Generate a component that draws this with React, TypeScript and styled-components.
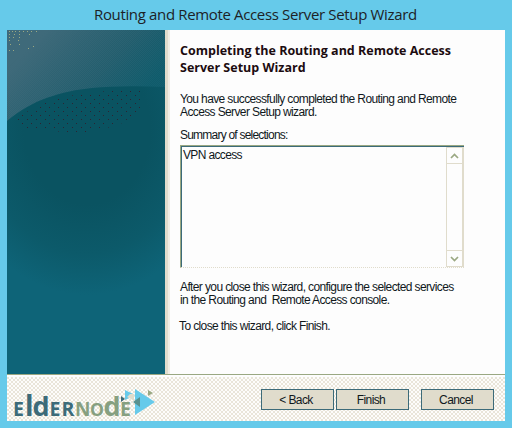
import React from "react";
import styled, { createGlobalStyle } from "styled-components";

const GlobalStyle = createGlobalStyle`
  *{box-sizing:border-box}
  body{margin:0;background:#66caea;overflow:hidden}
`;

const beige = "#e0dccc";
const olive = "#9aa882";
const teal = "#3c6b79";

const Window = styled.div`
  width: 512px;
  height: 428px;
  padding: 0 7px 7px;
  display: flex;
  flex-direction: column;
  background: #66caea;
  font-family: "Liberation Sans", Arial, sans-serif;
  color: #10181c;
`;

const TitleBar = styled.header`
  height: 30px;
  flex: none;
  padding-left: 87px;
  white-space: nowrap;
  font: 15px/29px "Open Sans", sans-serif;
  letter-spacing: -0.35px;
  color: #1d2226;
`;

const Body = styled.main`
  height: 344px;
  display: flex;
  background: #fdfdfd;
`;

const Banner = styled.svg`
  width: 158px;
  height: 344px;
  flex: none;
  display: block;
`;

const Edge = styled.div`
  width: 5px;
  flex: none;
  background: linear-gradient(90deg, ${beige} 3px, #f0ede5 3px);
`;

const Content = styled.section`
  padding: 12px 0 0 10px;
  display: flex;
  flex-direction: column;
  align-items: flex-start;
`;

const Heading = styled.h1`
  margin: 0;
  font: bold 12.5px/17px "Open Sans", sans-serif;
  white-space: nowrap;
  letter-spacing: 0;
  color: #1c0c10;
`;

const Text = styled.p<{ $top: number; $spacing?: number; $shift?: number }>`
  margin: ${(p) => p.$top}px 0 0 ${(p) => p.$shift ?? 0}px;
  font-size: 12px;
  line-height: 13px;
  white-space: pre;
  letter-spacing: ${(p) => p.$spacing ?? -0.62}px;
`;

const ListBox = styled.div`
  width: 284px;
  height: 123px;
  margin-top: 3px;
  display: flex;
  justify-content: space-between;
  border-top: 1px solid ${olive};
  border-left: 1px solid ${olive};
  border-bottom: 1px dotted ${beige};
  box-shadow: inset 1px 1px ${teal};
`;

const ListItem = styled.span`
  padding: 3px 0 0 2px;
  font-size: 12px;
  line-height: 13px;
  letter-spacing: -0.65px;
`;

const ScrollBar = styled.div`
  width: 18px;
  margin-top: 1px;
  display: flex;
  flex-direction: column;
  justify-content: space-between;
  border: 1px solid ${beige};
  border-right-width: 2px;
`;

const ScrollButton = styled.div<{ $down?: boolean }>`
  height: 16px;
  display: flex;
  align-items: center;
  justify-content: center;
  border-${(p) => (p.$down ? "top" : "bottom")}: 1px solid ${beige};
`;

const Footer = styled.footer`
  height: 47px;
  display: flex;
  justify-content: space-between;
  border-top: 1px solid ${olive};
  background: repeating-conic-gradient(#e9e5d9 0 25%, #fdfdfb 0 50%) 0 0 / 4px 4px;
  box-shadow: inset 0 2px #fdfdfd;
`;

const Logo = styled.svg`
  width: 155px;
  height: 46px;
  display: block;
  overflow: visible;
`;

const Buttons = styled.div`
  display: flex;
  padding: 14px 11px 0 0;
`;

const Button = styled.button<{ $gap: number }>`
  width: 73px;
  height: 21px;
  margin-left: ${(p) => p.$gap}px;
  padding: 1px 3px 0 0;
  border: 1px solid ${teal};
  border-radius: 0;
  background: radial-gradient(circle at 1px 1px, #fdfdfd 0.6px, transparent 0.7px) 0 0 / 4px 4px ${beige};
  color: #10181c;
  font: 12px/19px "Liberation Sans", Arial, sans-serif;
  letter-spacing: -0.6px;
`;

const LogoText = styled.text`
  font-family: "Open Sans", sans-serif;
  font-weight: 700;
`;

/* character, left edge, font size, colour */
const logoLetters: [string, number, number, string][] = [
  ["E", 13, 19.5, teal],
  ["l", 25, 28, teal],
  ["d", 32.5, 27, teal],
  ["E", 49.5, 19.5, teal],
  ["R", 61.5, 19.5, teal],
  ["N", 75, 19, "#86a080"],
  ["O", 90, 17.5, "#86a080"],
  ["d", 103.5, 27, "#86a080"],
  ["E", 120, 19.5, "#86a080"],
];

const Chevron = ({ down = false }: { down?: boolean }) => (
  <svg width="9" height="6" viewBox="0 0 9 6" fill="none" stroke={olive} strokeWidth="1.7">
    <path d={down ? "M1 1 4.5 4.5 8 1" : "M1 5 4.5 1.5 8 5"} />
  </svg>
);

export default function App() {
  return (
    <>
      <GlobalStyle />
      <Window>
        <TitleBar><span>Routing and Remote Access Server Setup Wizard</span></TitleBar>
        <Body>
          <Banner viewBox="0 0 158 344">
            <defs>
              <linearGradient id="sky" gradientUnits="userSpaceOnUse" x1="40" y1="0" x2="125" y2="75">
                <stop offset="0" stopColor="#3f6a7a" />
                <stop offset="0.6" stopColor="#2b6272" />
                <stop offset="1" stopColor="#145f70" />
              </linearGradient>
              <radialGradient id="hill" gradientUnits="userSpaceOnUse" cx="80" cy="100" r="165" gradientTransform="translate(12 0) scale(.85 1)">
                <stop offset="0.45" stopColor="#0a5361" />
                <stop offset="0.75" stopColor="#0c5a6a" />
                <stop offset="1" stopColor="#0e6478" />
              </radialGradient>
              <pattern id="sparkle" width="9" height="8" patternUnits="userSpaceOnUse">
                <path d="M2 1h1v1h-1zM6 5h1v1h-1z" fill="#2c2432" />
              </pattern>
              <pattern id="grain" width="2" height="2" patternUnits="userSpaceOnUse">
                <path d="M0 0h1v1H0zM1 1h1v1H1z" fill="#0a5361" />
              </pattern>
              <linearGradient id="grainFade" gradientUnits="userSpaceOnUse" x1="35" y1="5" x2="90" y2="65">
                <stop offset="0" stopColor="#000" />
                <stop offset="1" stopColor="#555" />
              </linearGradient>
              <mask id="grainMask"><rect width="158" height="95" fill="url(#grainFade)" /></mask>
            </defs>
            <rect width="158" height="344" fill="url(#sky)" />
            <rect width="158" height="95" fill="url(#grain)" mask="url(#grainMask)" />
            <path d="M0 91C24 70 55 61 85 58Q115 55 158 57V344H0Z" fill="url(#hill)" />
            <path d="M8 90C35 68 75 60 137 60V78L112 95 75 104 18 98Z" fill="url(#sparkle)" />
            <path d="M2 1.5h1m2 0h1m2 0h1m3 0h1m3 0h1m3 0h1m3 0h1m4 0h1M2 4.5h1m4 0h1m4 0h1m9 0h1M2 7.5h1m3 0h1m5 0h1M2 10.5h1m8 0h1M3 14.5h1m8 0h1m13 2h1M2 20.5h1m3 0h1m14-2h1" stroke={olive} />
          </Banner>
          <Edge />
          <Content>
            <Heading>Completing the Routing and Remote Access<br />Server Setup Wizard</Heading>
            <Text $top={17}>{"You have successfully completed the Routing and Remote\nAccess Server Setup wizard."}</Text>
            <Text $top={10} $spacing={-0.78}>Summary of selections:</Text>
            <ListBox>
              <ListItem>VPN access</ListItem>
              <ScrollBar>
                <ScrollButton><Chevron /></ScrollButton>
                <ScrollButton $down><Chevron down /></ScrollButton>
              </ScrollBar>
            </ListBox>
            <Text $top={13}>{"After you close this wizard, configure the selected services\nin the Routing and  Remote Access console."}</Text>
            <Text $top={13} $shift={-1}>To close this wizard, click Finish.</Text>
          </Content>
        </Body>
        <Footer>
          <Logo viewBox="7 375 155 46">
            <LogoText y="416">
              {logoLetters.map(([char, x, size, color]) => (
                <tspan key={x} x={x} fill={color} fontSize={size}>{char}</tspan>
              ))}
            </LogoText>
            <path d="M135 389 155 402 135 415Z" fill="#66caea" />
            <path d="M125 390 135 395 125 400Z" fill="#66caea" />
            <path d="M127 397 130 394H134V401L131 399Z" fill={beige} />
            <path d="M148 390 153 393 148 396Z" fill={olive} />
            <path d="M121 396 125 399 121 402Z" fill={teal} />
            <path d="M140 397V407L133 402Z" fill="#58918f" />
          </Logo>
          <Buttons>
            <Button $gap={0}>&lt; Back</Button>
            <Button $gap={2}>Finish</Button>
            <Button $gap={12}>Cancel</Button>
          </Buttons>
        </Footer>
      </Window>
    </>
  );
}
